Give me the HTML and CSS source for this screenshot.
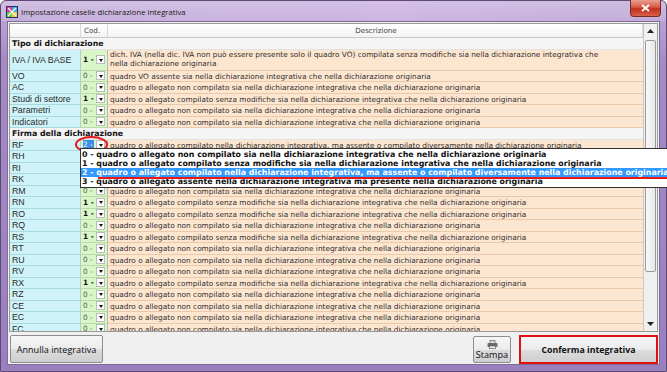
FILE: index.html
```html
<!DOCTYPE html>
<html>
<head>
<meta charset="utf-8">
<link rel="stylesheet" href="styles.css">
</head>
<body>
<div class="window">
  <div class="titlebar">
    <svg class="appicon" width="12" height="12" viewBox="0 0 12 12">
      <rect x="0" y="0" width="12" height="12" fill="#2a2a6a"/>
      <rect x="1" y="1" width="5" height="5" fill="#e23a9a"/>
      <rect x="6" y="1" width="5" height="5" fill="#3ab0e2"/>
      <rect x="1" y="6" width="5" height="5" fill="#5bd14a"/>
      <rect x="6" y="6" width="5" height="5" fill="#f2d23a"/>
      <path d="M2 2 L10 10 M10 2 L2 10" stroke="#fff" stroke-width="1.2"/>
    </svg>
    <span class="title">Impostazione caselle dichiarazione integrativa</span>
    <div class="close">
      <svg width="9" height="8" viewBox="0 0 9 8"><path d="M1 1 L8 7 M8 1 L1 7" stroke="#fff" stroke-width="1.8"/></svg>
    </div>
  </div>
  <div class="client">
    <div class="gridwrap">
      <div class="grid">
        <div class="row head"><div class="c1"></div><div class="c2">Cod.</div><div class="c3 center">Descrizione</div></div>
        <div class="row section"><div class="sec">Tipo di dichiarazione</div></div>
        <div class="row tall"><div class="c1">IVA / IVA BASE</div><div class="c2"><b class="v1">1 -</b><i class="arr"></i></div><div class="c3">dich. IVA (nella dic. IVA non può essere presente solo il quadro VO) compilata senza modifiche sia nella dichiarazione integrativa che nella dichiarazione originaria</div></div>
        <div class="row"><div class="c1">VO</div><div class="c2"><span class="v0">0 -</span><i class="arr"></i></div><div class="c3">quadro VO assente sia nella dichiarazione integrativa che nella dichiarazione originaria</div></div>
        <div class="row"><div class="c1">AC</div><div class="c2"><span class="v0">0 -</span><i class="arr"></i></div><div class="c3">quadro o allegato non compilato sia nella dichiarazione integrativa che nella dichiarazione originaria</div></div>
        <div class="row"><div class="c1">Studi di settore</div><div class="c2"><b class="v1">1 -</b><i class="arr"></i></div><div class="c3">quadro o allegato compilato senza modifiche sia nella dichiarazione integrativa che nella dichiarazione originaria</div></div>
        <div class="row"><div class="c1">Parametri</div><div class="c2"><span class="v0">0 -</span><i class="arr"></i></div><div class="c3">quadro o allegato non compilato sia nella dichiarazione integrativa che nella dichiarazione originaria</div></div>
        <div class="row"><div class="c1">Indicatori</div><div class="c2"><span class="v0">0 -</span><i class="arr"></i></div><div class="c3">quadro o allegato non compilato sia nella dichiarazione integrativa che nella dichiarazione originaria</div></div>
        <div class="row section"><div class="sec">Firma della dichiarazione</div></div>
        <div class="row"><div class="c1">RF</div><div class="c2 sel"><span class="v2">2 -</span><i class="arr"></i></div><div class="c3">quadro o allegato compilato nella dichiarazione integrativa, ma assente o compilato diversamente nella dichiarazione originaria</div></div>
        <div class="row"><div class="c1">RH</div><div class="c2"><span class="v0">0 -</span><i class="arr"></i></div><div class="c3">quadro o allegato non compilato sia nella dichiarazione integrativa che nella dichiarazione originaria</div></div>
        <div class="row"><div class="c1">RI</div><div class="c2"><span class="v0">0 -</span><i class="arr"></i></div><div class="c3">quadro o allegato non compilato sia nella dichiarazione integrativa che nella dichiarazione originaria</div></div>
        <div class="row"><div class="c1">RK</div><div class="c2"><span class="v0">0 -</span><i class="arr"></i></div><div class="c3">quadro o allegato non compilato sia nella dichiarazione integrativa che nella dichiarazione originaria</div></div>
        <div class="row"><div class="c1">RM</div><div class="c2"><span class="v0">0 -</span><i class="arr"></i></div><div class="c3">quadro o allegato non compilato sia nella dichiarazione integrativa che nella dichiarazione originaria</div></div>
        <div class="row"><div class="c1">RN</div><div class="c2"><b class="v1">1 -</b><i class="arr"></i></div><div class="c3">quadro o allegato compilato senza modifiche sia nella dichiarazione integrativa che nella dichiarazione originaria</div></div>
        <div class="row"><div class="c1">RO</div><div class="c2"><b class="v1">1 -</b><i class="arr"></i></div><div class="c3">quadro o allegato compilato senza modifiche sia nella dichiarazione integrativa che nella dichiarazione originaria</div></div>
        <div class="row"><div class="c1">RQ</div><div class="c2"><span class="v0">0 -</span><i class="arr"></i></div><div class="c3">quadro o allegato non compilato sia nella dichiarazione integrativa che nella dichiarazione originaria</div></div>
        <div class="row"><div class="c1">RS</div><div class="c2"><b class="v1">1 -</b><i class="arr"></i></div><div class="c3">quadro o allegato compilato senza modifiche sia nella dichiarazione integrativa che nella dichiarazione originaria</div></div>
        <div class="row"><div class="c1">RT</div><div class="c2"><span class="v0">0 -</span><i class="arr"></i></div><div class="c3">quadro o allegato non compilato sia nella dichiarazione integrativa che nella dichiarazione originaria</div></div>
        <div class="row"><div class="c1">RU</div><div class="c2"><span class="v0">0 -</span><i class="arr"></i></div><div class="c3">quadro o allegato non compilato sia nella dichiarazione integrativa che nella dichiarazione originaria</div></div>
        <div class="row"><div class="c1">RV</div><div class="c2"><span class="v0">0 -</span><i class="arr"></i></div><div class="c3">quadro o allegato non compilato sia nella dichiarazione integrativa che nella dichiarazione originaria</div></div>
        <div class="row"><div class="c1">RX</div><div class="c2"><b class="v1">1 -</b><i class="arr"></i></div><div class="c3">quadro o allegato compilato senza modifiche sia nella dichiarazione integrativa che nella dichiarazione originaria</div></div>
        <div class="row"><div class="c1">RZ</div><div class="c2"><span class="v0">0 -</span><i class="arr"></i></div><div class="c3">quadro o allegato non compilato sia nella dichiarazione integrativa che nella dichiarazione originaria</div></div>
        <div class="row"><div class="c1">CE</div><div class="c2"><span class="v0">0 -</span><i class="arr"></i></div><div class="c3">quadro o allegato non compilato sia nella dichiarazione integrativa che nella dichiarazione originaria</div></div>
        <div class="row"><div class="c1">EC</div><div class="c2"><span class="v0">0 -</span><i class="arr"></i></div><div class="c3">quadro o allegato non compilato sia nella dichiarazione integrativa che nella dichiarazione originaria</div></div>
        <div class="row"><div class="c1">FC</div><div class="c2"><span class="v0">0 -</span><i class="arr"></i></div><div class="c3">quadro o allegato non compilato sia nella dichiarazione integrativa che nella dichiarazione originaria</div></div>
      </div>
      <div class="scrollbar">
        <div class="sb-btn"><svg width="7" height="4" viewBox="0 0 7 4"><path d="M0 4 L3.5 0 L7 4 Z" fill="#222"/></svg></div>
        <div class="sb-track"><div class="sb-thumb"></div></div>
        <div class="sb-btn"><svg width="7" height="4" viewBox="0 0 7 4"><path d="M0 0 L3.5 4 L7 0 Z" fill="#222"/></svg></div>
      </div>
    </div>
    <div class="buttons">
      <div class="btn annulla">Annulla integrativa</div>
      <div class="spacer"></div>
      <div class="btn stampa">
        <svg width="11" height="9" viewBox="0 0 11 9">
          <rect x="3" y="0.3" width="5" height="3" fill="#ddd" stroke="#555" stroke-width="0.6"/>
          <rect x="0.5" y="3" width="10" height="4" rx="1" fill="#6a6a6a"/>
          <rect x="2.5" y="6" width="6" height="2.7" fill="#eee" stroke="#555" stroke-width="0.6"/>
        </svg>
        <span>Stampa</span>
      </div>
      <div class="btn conferma">Conferma integrativa</div>
    </div>
  </div>
  <div class="ellipse"></div>
  <div class="dropdown">
    <div class="opt">0 - quadro o allegato non compilato sia nella dichiarazione integrativa che nella dichiarazione originaria</div>
    <div class="opt">1 - quadro o allegato compilato senza modifiche sia nella dichiarazione integrativa che nella dichiarazione originaria</div>
    <div class="opt hl">2 - quadro o allegato compilato nella dichiarazione integrativa, ma assente o compilato diversamente nella dichiarazione originaria</div>
    <div class="opt">3 - quadro o allegato assente nella dichiarazione integrativa ma presente nella dichiarazione originaria</div>
    <div class="redline"></div>
  </div>
</div>
</body>
</html>
```

FILE: styles.css
```css
* { box-sizing: border-box; }
html, body { margin: 0; padding: 0; }
body { width: 667px; height: 372px; overflow: hidden; background: #fff; }

.window {
  position: relative;
  width: 667px; height: 372px;
  background: linear-gradient(180deg, #c9b6dc 0px, #b9a2d2 20px, #a58bc4 60px, #9a7fbe 372px);
  border: 1px solid #5e4a78;
  border-radius: 6px 6px 0 0;
  display: flex; flex-direction: column;
  padding: 0 6px 6px 6px;
}
.titlebar {
  height: 21px;
  display: flex; align-items: center;
  position: relative;
  background: linear-gradient(90deg, rgba(255,255,255,0.15), rgba(230,210,245,0.4) 60%, rgba(255,255,255,0.1));
  margin: 0 -6px; padding: 0 6px;
  border-radius: 6px 6px 0 0;
}
.appicon { margin-left: -1px; margin-top: 1px; }
.title {
  font-family: "Open Sans", "Noto Sans", sans-serif;
  font-size: 7.7px; color: #1a1a1a; margin-left: 3px; margin-top: 1px;
}
.close {
  position: absolute; right: 5px; top: -1px;
  width: 31px; height: 17px;
  background: linear-gradient(180deg, #e8a091 0%, #d45a45 45%, #c0301e 55%, #d8604a 100%);
  border: 1px solid #7a2a28;
  border-top: none;
  border-radius: 0 0 4px 4px;
  display: flex; align-items: center; justify-content: center;
}
.client {
  flex: 1;
  background: #f0f0f0;
  border: 1px solid #7d6c96;
  display: flex; flex-direction: column;
  padding: 1px 0 0 1px;
}
.gridwrap {
  display: flex;
  height: 309px;
  border: 1px solid #9a9a9a;
  background: #fff;
  margin-right: 1px;
  overflow: hidden;
}
.grid {
  flex: 1;
  font-family: "DejaVu Sans", Verdana, sans-serif;
  font-size: 7.35px;
  color: #2e2e2e;
  overflow: hidden;
}
.row {
  display: flex;
  height: 11.5px;
  line-height: 11px;
  white-space: nowrap;
}
.row.tall { height: 21px; }
.c1 {
  width: 71px; flex: none;
  background: #cff3f8;
  border-bottom: 1px solid #a9d9df;
  border-right: 1px solid #b9c9cc;
  padding-left: 2px;
  overflow: hidden;
  font-family: "Liberation Sans", Arial, sans-serif;
  font-size: 8.8px;
  color: #2a2a2a;
}
.c2 {
  width: 27px; flex: none;
  background: #d9f6c9;
  border-bottom: 1px solid #b8dca5;
  border-right: 1px solid #b8b8b8;
  display: flex; align-items: center;
  padding-left: 2px;
  position: relative;
}
.c3 {
  flex: 1;
  background: #fde6d0;
  border-bottom: 1px solid #e9c9a9;
  padding-left: 2px;
  overflow: hidden;
}
.row.tall .c3 { white-space: normal; line-height: 8.5px; padding-top: 1.5px; padding-right: 26px; }
.row.tall .c1 { line-height: 20px; }
.center { text-align: center; }

.row.head { height: 14px; line-height: 14px; }
.row.head .c1, .row.head .c2, .row.head .c3 {
  background: linear-gradient(180deg, #ffffff, #f3f3f3);
  border-bottom: 1px solid #c8c8c8;
  border-right: 1px solid #d8d8d8;
  color: #444;
  font-family: "DejaVu Sans", Verdana, sans-serif;
  font-size: 7.15px;
}
.row.head .c2 { display: block; padding-left: 3px; }
.row.section { background: #f5f5f5; border-bottom: 1px solid #e2e2e2; }
.sec { font-weight: bold; font-size: 7.8px; padding-left: 2px; color: #111; line-height: 11px; }

.v0 { color: #5a6a52; width: 13px; }
.v1 { color: #111; width: 13px; }
.v2 { width: 11px; margin-right: 2px; color: #fff; background: #3d8ee8; line-height: 9px; }
.arr {
  display: block;
  width: 9px; height: 9px;
  background: #fff;
  border: 1px solid #bbb;
  position: relative;
  margin-left: 0;
}
.arr::after {
  content: ""; position: absolute; left: 1.5px; top: 2.5px;
  border-left: 2.5px solid transparent; border-right: 2.5px solid transparent;
  border-top: 3px solid #111;
}

.scrollbar {
  width: 14px; flex: none;
  background: #f0f0f0;
  border-left: 1px solid #c8c8c8;
  display: flex; flex-direction: column;
}
.sb-btn {
  height: 14px; display: flex; align-items: center; justify-content: center;
}
.sb-track { flex: 1; padding: 2px 1px; }
.sb-thumb {
  height: 232px;
  border: 1px solid #9a9a9a;
  border-radius: 2px;
  background: linear-gradient(90deg, #f7f7f7, #e8e8e8);
}

.buttons {
  flex: 1;
  display: flex; align-items: flex-start;
  padding: 3px 1px 0 1px;
  gap: 8px;
}
.spacer { flex: 1; }
.btn {
  font-family: "Open Sans", "Noto Sans", sans-serif;
  font-size: 9.1px; color: #111;
  border: 1px solid #8e8e8e;
  border-radius: 2px;
  background: linear-gradient(180deg, #f6f6f6 0%, #ebebeb 50%, #dcdcdc 51%, #cfcfcf 100%);
  display: flex; align-items: center; justify-content: center;
}
.annulla { width: 93px; height: 28px; }
.stampa { width: 38px; height: 27px; flex-direction: column; margin-top: 1px; gap: 1px; }
.stampa span { line-height: 10px; }
.conferma {
  width: 139px; height: 29px;
  font-weight: bold; font-size: 8.8px;
  border: 2px solid #e01010;
  border-radius: 0;
}

.ellipse {
  position: absolute; left: 74px; top: 135px;
  width: 33px; height: 17px;
  border: 2px solid #e81818;
  border-radius: 50%;
}
.dropdown {
  position: absolute; left: 79px; top: 147px;
  width: 600px;
  background: #fff;
  border: 1px solid #333;
  font-family: "DejaVu Sans", Verdana, sans-serif;
  font-weight: bold; font-size: 7.9px;
  color: #111;
  padding: 1px 0;
}
.opt { height: 9px; line-height: 9px; white-space: nowrap; padding-left: 1px; }
.opt.hl { background: #3399ff; color: #fff; }
.redline {
  position: absolute; left: 17px; top: 28px; right: 0;
  height: 2px; background: #e81818;
}
```
